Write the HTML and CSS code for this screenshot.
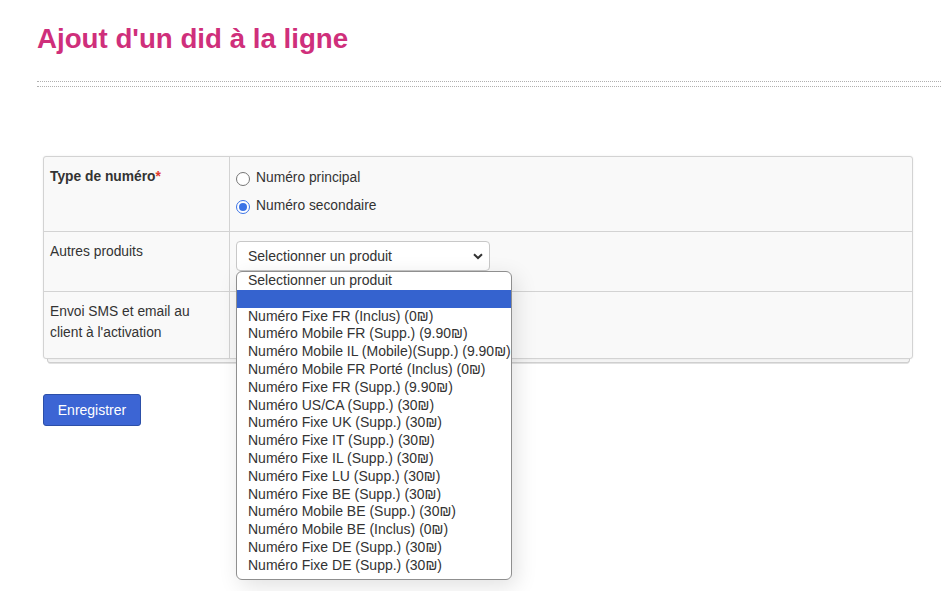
FILE: index.html
```html
<!DOCTYPE html>
<html lang="fr">
<head>
<meta charset="utf-8">
<title>Ajout d'un did</title>
<link rel="stylesheet" href="styles.css">
</head>
<body>
<div class="page">
  <h1 class="title">Ajout d'un did à la ligne</h1>
  <div class="sep"></div>

  <div class="form-wrap">
    <div class="form-table">
      <div class="row row-1">
        <div class="label bold">Type de numéro<span class="req">*</span></div>
        <div class="value radios">
          <label class="radio"><span class="rb"></span>Numéro principal</label>
          <label class="radio"><span class="rb on"></span>Numéro secondaire</label>
        </div>
      </div>
      <div class="row row-2">
        <div class="label">Autres produits</div>
        <div class="value">
          <div class="select">
            <span>Selectionner un produit</span>
            <svg class="chev" width="10" height="7" viewBox="0 0 10 7"><path d="M1 1.2 L5 5 L9 1.2" fill="none" stroke="#333" stroke-width="2"/></svg>
          </div>
        </div>
      </div>
      <div class="row row-3">
        <div class="label">Envoi SMS et email au client à l'activation</div>
        <div class="value"><span class="toggle"></span></div>
      </div>
    </div>

    <ul class="dropdown">
      <li>Selectionner un produit</li>
      <li class="sel">&nbsp;</li>
      <li>Numéro Fixe FR (Inclus) (0₪)</li>
      <li>Numéro Mobile FR (Supp.) (9.90₪)</li>
      <li>Numéro Mobile IL (Mobile)(Supp.) (9.90₪)</li>
      <li>Numéro Mobile FR Porté (Inclus) (0₪)</li>
      <li>Numéro Fixe FR (Supp.) (9.90₪)</li>
      <li>Numéro US/CA (Supp.) (30₪)</li>
      <li>Numéro Fixe UK (Supp.) (30₪)</li>
      <li>Numéro Fixe IT (Supp.) (30₪)</li>
      <li>Numéro Fixe IL (Supp.) (30₪)</li>
      <li>Numéro Fixe LU (Supp.) (30₪)</li>
      <li>Numéro Fixe BE (Supp.) (30₪)</li>
      <li>Numéro Mobile BE (Supp.) (30₪)</li>
      <li>Numéro Mobile BE (Inclus) (0₪)</li>
      <li>Numéro Fixe DE (Supp.) (30₪)</li>
      <li>Numéro Fixe DE (Supp.) (30₪)</li>
    </ul>
  </div>

  <button class="btn">Enregistrer</button>
</div>
</body>
</html>
```

FILE: styles.css
```css
* { box-sizing: border-box; }
html, body { margin: 0; padding: 0; background: #fff; }
body {
  font-family: "Liberation Sans", Arial, sans-serif;
  color: #333;
  width: 941px;
  height: 591px;
  overflow: hidden;
}
.page {
  padding: 23px 0 0 37px;
}
.title {
  margin: 0;
  font-size: 27.7px;
  line-height: 32px;
  font-weight: bold;
  color: #cf2f7b;
}
.sep {
  margin-top: 26px;
  height: 6px;
  border-top: 1px dotted #b0b0b0;
  border-bottom: 1px dotted #b0b0b0;
  margin-right: -10px;
}
.form-wrap {
  position: relative;
  isolation: isolate;
  margin: 69px 0 0 6px;
  width: 870px;
}
.form-table {
  position: relative;
  background: #f9f9f9;
  border: 1px solid #d3d3d3;
  border-radius: 3px;
  box-shadow: 0 0 2px rgba(0,0,0,0.08);
}
.form-table::after {
  content: "";
  position: absolute;
  left: 3px;
  right: 2px;
  bottom: -5px;
  height: 8px;
  border: 1px solid #cfcfcf;
  border-top: none;
  border-radius: 0 0 3px 3px;
  background: #f4f4f4;
  box-shadow: 0 2px 0 -1px #e2e2e2;
  z-index: -1;
}
.row {
  display: flex;
  border-top: 1px solid #d3d3d3;
}
.row:first-child { border-top: none; }
.row-1 { height: 74px; }
.row-2 { height: 60px; }
.row-3 { height: 67px; }
.label {
  width: 186px;
  flex: none;
  border-right: 1px solid #d3d3d3;
  padding: 9px 20px 0 6px;
  font-size: 13.8px;
  line-height: 21px;
  color: #333;
}
.label.bold { font-weight: bold; }
.req { color: #e0392f; }
.value {
  flex: 1;
  padding: 9px 6px 0 6px;
}
.radios {
  display: flex;
  flex-direction: column;
  gap: 8px;
  padding-top: 11px;
}
.radio {
  display: flex;
  align-items: center;
  gap: 6px;
  font-size: 13.8px;
  line-height: 20px;
  color: #333;
}
.rb {
  width: 14px;
  height: 14px;
  border-radius: 50%;
  border: 1px solid #767676;
  background: #fff;
  position: relative;
  top: 1px;
}
.rb.on {
  border: 1.5px solid #3b73e6;
}
.rb.on::after {
  content: "";
  position: absolute;
  left: 1.5px;
  top: 1.5px;
  width: 8px;
  height: 8px;
  border-radius: 50%;
  background: #3b73e6;
}
.select {
  width: 254px;
  height: 30px;
  border: 1px solid #c8c8c8;
  border-radius: 4px;
  background: #fff;
  display: flex;
  align-items: center;
  justify-content: space-between;
  padding: 0 6px 0 11px;
  font-size: 14px;
  color: #333;
}
.chev { margin-top: 1px; }
.toggle {
  display: block;
  width: 14px;
  height: 18px;
  margin-top: 12px;
  border: 1px solid #3b73e6;
  border-radius: 3px;
}
.dropdown {
  position: absolute;
  left: 193px;
  top: 115px;
  width: 276px;
  margin: 0;
  padding: 0 0 4px 0;
  list-style: none;
  background: #fff;
  border: 1px solid #8f8f8f;
  border-radius: 6px;
  box-shadow: 4px 6px 22px rgba(0,0,0,0.12);
  z-index: 5;
  overflow: hidden;
}
.dropdown li {
  height: 17.8px;
  line-height: 17.8px;
  padding-left: 11px;
  font-size: 14px;
  color: #333;
  white-space: nowrap;
}
.dropdown li.sel {
  background: #3563cf;
}
.btn {
  display: block;
  margin: 35px 0 0 6px;
  width: 98px;
  height: 32px;
  background: #3c65d4;
  border: 1px solid #2c4fa8;
  border-radius: 3px;
  color: #fff;
  font-family: "Liberation Sans", Arial, sans-serif;
  font-size: 14px;
  padding: 0;
}
```
